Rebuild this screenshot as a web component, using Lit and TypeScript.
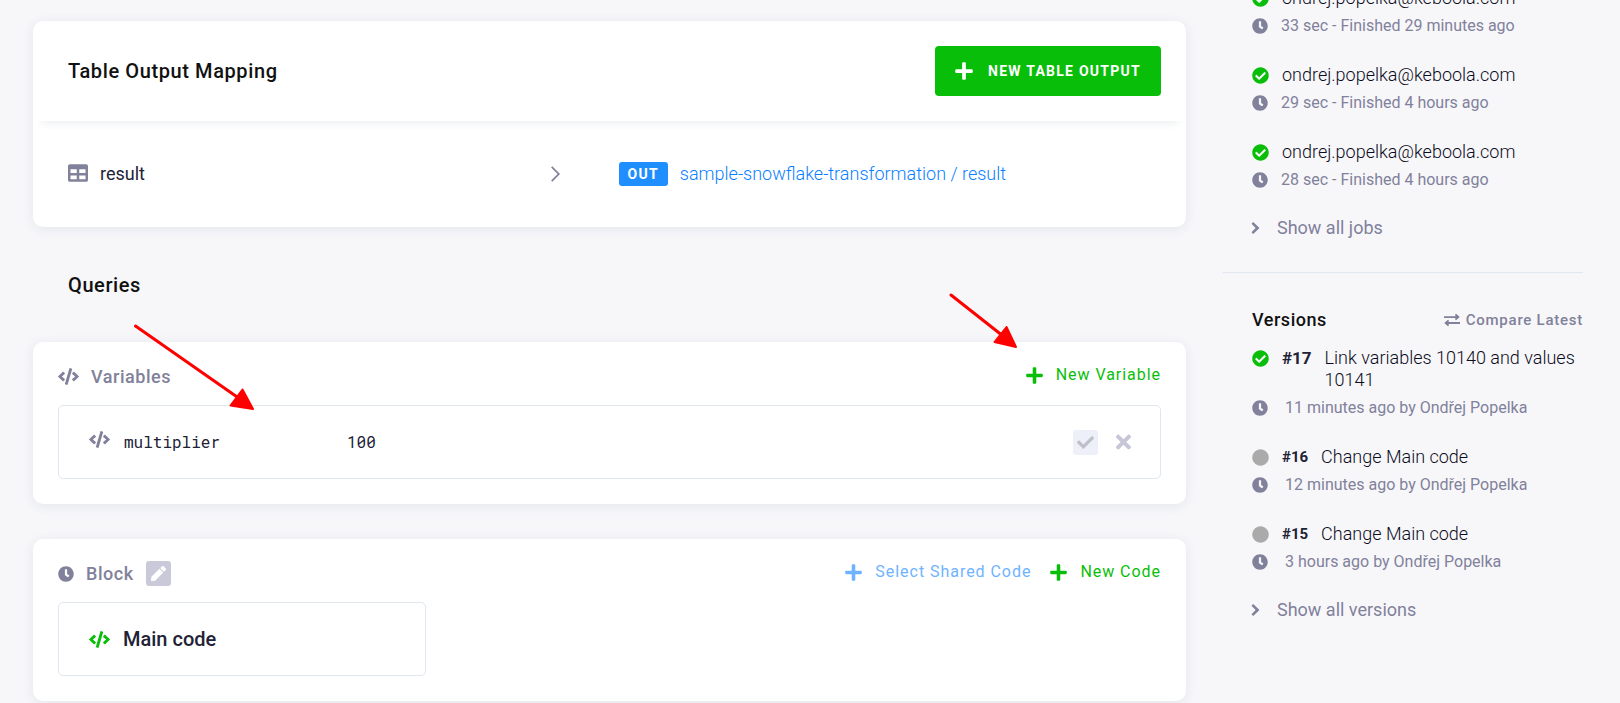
import { LitElement, html, svg, css } from "lit";
import { customElement, property } from "lit/decorators.js";

type Glyph = { w: number; h: number; d: string };

const GLYPHS: Record<string, Glyph> = {
  plus: { w: 448, h: 512, d: "M416 208H272V64c0-17.67-14.33-32-32-32h-32c-17.67 0-32 14.33-32 32v144H32c-17.67 0-32 14.33-32 32v32c0 17.67 14.33 32 32 32h144v144c0 17.67 14.33 32 32 32h32c17.67 0 32-14.33 32-32V304h144c17.67 0 32-14.33 32-32v-32c0-17.67-14.33-32-32-32z" },
  code: { w: 640, h: 512, d: "M278.9 511.5l-61-17.7c-6.4-1.8-10-8.5-8.2-14.9L346.2 8.7c1.8-6.4 8.5-10 14.9-8.2l61 17.7c6.4 1.8 10 8.5 8.2 14.9L293.8 503.3c-1.9 6.4-8.5 10.1-14.9 8.2zm-114-112.2l43.5-46.4c4.6-4.9 4.3-12.7-.8-17.2L117 256l90.6-79.7c5.1-4.5 5.5-12.3.8-17.2l-43.5-46.4c-4.5-4.8-12.1-5.1-17-.5L3.8 247.2c-5.1 4.7-5.1 12.8 0 17.5l144.1 135.1c4.9 4.6 12.5 4.4 17-.5zm327.2.6l144.1-135.1c5.1-4.7 5.1-12.8 0-17.5L492.1 112.1c-4.8-4.5-12.4-4.3-17 .5L431.6 159c-4.6 4.9-4.3 12.7.8 17.2L523 256l-90.6 79.7c-5.1 4.5-5.5 12.3-.8 17.2l43.5 46.4c4.5 4.9 12.1 5.1 17 .6z" },
  clock: { w: 512, h: 512, d: "M256 8C119 8 8 119 8 256s111 248 248 248 248-111 248-248S393 8 256 8zm57.1 350.1L224.9 294c-3.1-2.3-4.9-5.9-4.9-9.7V116c0-6.6 5.4-12 12-12h48c6.6 0 12 5.4 12 12v137.7l63.5 46.2c5.4 3.9 6.5 11.4 2.6 16.8l-28.2 38.8c-3.9 5.3-11.4 6.5-16.8 2.6z" },
  success: { w: 512, h: 512, d: "M504 256c0 136.967-111.033 248-248 248S8 392.967 8 256 119.033 8 256 8s248 111.033 248 248zM227.314 387.314l184-184c6.248-6.248 6.248-16.379 0-22.627l-22.627-22.627c-6.248-6.249-16.379-6.249-22.628 0L216 308.118l-70.059-70.059c-6.248-6.248-16.379-6.248-22.628 0l-22.627 22.627c-6.248 6.248-6.248 16.379 0 22.627l104 104c6.249 6.249 16.379 6.249 22.628.001z" },
  dot: { w: 512, h: 512, d: "M256 8C119 8 8 119 8 256s111 248 248 248 248-111 248-248S393 8 256 8z" },
  check: { w: 512, h: 512, d: "M173.898 439.404l-166.4-166.4c-9.997-9.997-9.997-26.206 0-36.204l36.203-36.204c9.997-9.998 26.207-9.998 36.204 0L192 312.69 432.095 72.596c9.997-9.997 26.207-9.997 36.204 0l36.203 36.204c9.997 9.997 9.997 26.206 0 36.204l-294.4 294.401c-9.998 9.997-26.207 9.997-36.204-.001z" },
  times: { w: 352, h: 512, d: "M242.72 256l100.07-100.07c12.28-12.28 12.28-32.19 0-44.48l-22.24-22.24c-12.28-12.28-32.19-12.28-44.48 0L176 189.28 75.93 89.21c-12.28-12.28-32.19-12.28-44.48 0L9.21 111.45c-12.28 12.28-12.28 32.19 0 44.48L109.28 256 9.21 356.07c-12.28 12.28-12.28 32.19 0 44.48l22.24 22.24c12.28 12.28 32.2 12.28 44.48 0L176 322.72l100.07 100.07c12.28 12.28 32.2 12.28 44.48 0l22.24-22.24c12.28-12.28 12.28-32.19 0-44.48L242.72 256z" },
  pen: { w: 512, h: 512, d: "M290.74 93.24l128.02 128.02-277.99 277.99-114.14 12.6C11.35 513.54-1.56 500.62.14 485.34l12.7-114.22 277.9-277.88zm207.2-19.06l-60.11-60.11c-18.75-18.75-49.16-18.75-67.91 0l-56.55 56.55 128.02 128.02 56.55-56.55c18.75-18.76 18.75-49.16 0-67.91z" },
  table: { w: 512, h: 512, d: "M464 32H48C21.49 32 0 53.49 0 80v352c0 26.51 21.49 48 48 48h416c26.51 0 48-21.49 48-48V80c0-26.51-21.49-48-48-48zM224 416H64v-96h160v96zm0-160H64v-96h160v96zm224 160H288v-96h160v96zm0-160H288v-96h160v96z" },
  angle: { w: 7, h: 12, d: "M1.2 0 L7 5.4 Q7.5 6 7 6.6 L1.2 12 L-.5 10.3 L3.6 6 L-.5 1.7 Z" },
  chevron: { w: 9, h: 16, d: "M1.3 .3 L9 8 L1.3 15.7 L.1 14.5 L6.6 8 L.1 1.5 Z" },
  exchange: { w: 16, h: 12, d: "M0 2.2H11.3V0.3Q11.6 -.4 12.3 0L15.3 2.6Q15.7 3.1 15.3 3.6L12.3 6.1Q11.6 6.4 11.3 5.8V4H0ZM16 8.1H4.7V6.2Q4.4 5.6 3.7 6L.7 8.5Q.3 9 .7 9.5L3.7 12Q4.4 12.4 4.7 11.7V9.9H16Z" },
};

// `size` is the drawn height; the width follows from the glyph's proportions.
const icon = (name: string, size: number) => {
  const g = GLYPHS[name];
  return html`<svg class="icon" aria-hidden="true" overflow="visible"
    width=${Math.round((size * g.w) / g.h)} height=${size}
    viewBox="0 0 ${g.w} ${g.h}">${svg`<path fill="currentColor" d=${g.d}></path>`}</svg>`;
};

const base = css`
  * { box-sizing: border-box; }
  h2, h3, h4, p, ul { margin: 0; padding: 0; }
  ul { list-style: none; }
  a { color: inherit; text-decoration: none; }
  button {
    display: inline-flex; align-items: center; justify-content: center;
    margin: 0; padding: 0; border: 0; background: none;
    font: inherit; color: inherit; cursor: pointer;
  }
  .icon { display: block; flex: none; }
`;

@customElement("job-entry")
class JobEntry extends LitElement {
  @property() user = "";
  @property() detail = "";

  static styles = [base, css`
    :host { display: grid; gap: 6px; line-height: 22px; }
    .row { display: flex; align-items: center; gap: 13px; }
    .user { color: var(--ink-light); font-size: 18px; font-weight: 350; }
    .ok { color: var(--green); }
    .meta { color: var(--muted); font-size: 16px; }
  `];

  render() {
    return html`
      <div class="row user"><span class="ok">${icon("success", 17)}</span><span>${this.user}</span></div>
      <div class="row meta">${icon("clock", 16)}<span>${this.detail}</span></div>`;
  }
}

@customElement("version-entry")
class VersionEntry extends LitElement {
  @property() number = "";
  @property() change = "";
  @property() detail = "";
  @property({ type: Boolean }) current = false;

  static styles = [base, css`
    :host { display: grid; gap: 6px; line-height: 22px; }
    .row { display: flex; align-items: flex-start; gap: 13px; color: var(--ink-light); font-size: 18px; font-weight: 350; }
    .mark { display: flex; align-items: center; height: 22px; color: #aaaaaa; }
    .current { color: var(--green); }
    .number { color: var(--ink); font-size: 15px; font-weight: 700; }
    .number.latest { font-size: 17px; }
    .meta { display: flex; align-items: center; gap: 17px; color: var(--muted); font-size: 16px; }
  `];

  render() {
    return html`
      <div class="row">
        <span class="mark ${this.current ? "current" : ""}">${icon(this.current ? "success" : "dot", 17)}</span>
        <span class="number ${this.current ? "latest" : ""}">${this.number}</span>
        <span>${this.change}</span>
      </div>
      <div class="meta">${icon("clock", 16)}<span>${this.detail}</span></div>`;
  }
}

@customElement("app-root")
class AppRoot extends LitElement {
  private jobs = [
    "33 sec - Finished 29 minutes ago",
    "29 sec - Finished 4 hours ago",
    "28 sec - Finished 4 hours ago",
  ];
  private versions = [
    { number: "#17", change: "Link variables 10140 and values 10141", detail: "11 minutes ago by Ondřej Popelka" },
    { number: "#16", change: "Change Main code", detail: "12 minutes ago by Ondřej Popelka" },
    { number: "#15", change: "Change Main code", detail: "3 hours ago by Ondřej Popelka" },
  ];

  static styles = [base, css`
    :host {
      --ink: #222236;
      --ink-light: #0c0c1c;
      --muted: #81819b;
      --green: #09be09;
      --blue: #1f8fff;
      --line: #e1e7f1;
      display: grid;
      grid-template-columns: minmax(0, 1fr) 360px;
      column-gap: 37px;
      position: relative;
      min-height: 100vh;
      overflow: hidden;
      padding: 0 37px 0 33px;
      background: #f7f7fa;
      color: var(--ink);
      font: 400 18px/22px Roboto, sans-serif;
    }
    .main { padding: 21px 0 2px; }
    .card { background: #fff; border-radius: 10px; box-shadow: 0 2px 12px rgba(34, 51, 84, 0.09); }
    .title { color: #111; font-size: 20px; font-weight: 500; line-height: 24px; letter-spacing: 0.03em; }
    .lead { padding: 46px 35px 45px; }

    .mapping-head {
      display: flex; align-items: center; justify-content: space-between;
      height: 100px; padding: 0 25px 0 35px;
      box-shadow: 0 10px 8px -8px rgba(34, 51, 84, 0.09);
    }
    .primary {
      gap: 15px; height: 50px; padding: 0 20px; border-radius: 4px;
      background: var(--green); color: #fff;
      font-size: 14px; font-weight: 700; letter-spacing: 0.09em; text-transform: uppercase;
    }
    .mapping-row {
      display: grid; grid-template-columns: 1fr 1fr; align-items: center; column-gap: 8px;
      height: 106px; padding: 0 25px 0 35px;
    }
    .source { display: flex; align-items: center; padding-right: 51px; color: var(--muted); }
    .source-name { display: flex; flex: 1; align-items: flex-start; gap: 12px; }
    .source-label { color: var(--ink); }
    .target { display: flex; align-items: center; gap: 12px; color: #0a80ff; font-weight: 350; }
    .badge {
      padding: 0 9px; border-radius: 3px; background: var(--blue); color: #fff;
      font-size: 14px; font-weight: 700; line-height: 24px; letter-spacing: 0.09em;
    }

    .panel { padding: 20px 25px 25px; }
    .panel + .panel { margin-top: 35px; }
    .panel-head { display: flex; align-items: flex-start; justify-content: space-between; height: 43px; }
    .panel-name {
      display: flex; align-items: center; gap: 12px; height: 29px; color: var(--muted);
    }
    .panel-title { font-size: 18px; font-weight: 500; letter-spacing: 0.03em; }
    .actions { display: flex; gap: 19px; }
    .action { gap: 13px; height: 26px; color: var(--green); font-size: 16px; font-weight: 450; letter-spacing: 0.06em; }
    .shared { color: #6fb3ff; }
    .square { width: 25px; height: 25px; border-radius: 3px; }
    .edit { background: #c9c9da; color: #fff; }
    .save { background: #edf0f8; color: #bfbfca; }
    .remove { color: #c6c6d8; }

    .item { display: flex; align-items: center; gap: 13px; height: 74px; padding: 0 30px; border: 1px solid var(--line); border-radius: 5px; }
    .variable { gap: 0; padding-right: 24px; color: var(--muted); }
    .variable-name { display: flex; align-items: flex-start; gap: 14px; width: 258px; }
    .mono { color: var(--ink); font: 400 16px/22px "Roboto Mono", "DejaVu Sans Mono", monospace; }
    .variable-value { flex: 1; }
    .item-actions { display: flex; gap: 13px; }
    .codes { display: grid; grid-template-columns: repeat(3, minmax(0, 1fr)); }
    .code { color: var(--green); }
    .code-name { color: var(--ink); font-size: 20px; font-weight: 500; line-height: 24px; }

    .side { display: grid; align-content: start; margin-top: -13px; }
    .section { padding-left: 29px; }
    .jobs { padding-bottom: 33px; border-bottom: 1px solid var(--line); }
    .versions { padding-top: 35px; }
    .entries { display: grid; gap: 27px; }
    .side-head { display: flex; align-items: center; justify-content: space-between; height: 24px; margin-bottom: 15px; }
    .side-title { color: #111; font-size: 18px; font-weight: 500; letter-spacing: 0.03em; }
    .compare { display: flex; align-items: center; gap: 6px; color: var(--muted); font-size: 15px; font-weight: 500; letter-spacing: 0.05em; }
    .more { display: flex; align-items: center; gap: 18px; margin-top: 26px; color: var(--muted); }

    .arrow { position: absolute; pointer-events: none; color: #f00; }
    .to-variable { left: 134px; top: 324px; }
    .to-new { left: 949px; top: 293px; }
  `];

  private action(label: string, extra = "") {
    return html`<button type="button" class="action ${extra}">${icon("plus", 19)}<span>${label}</span></button>`;
  }

  render() {
    return html`
      <main class="main">
        <section class="card">
          <header class="mapping-head">
            <h2 class="title">Table Output Mapping</h2>
            <button type="button" class="primary">${icon("plus", 20)}<span>New Table Output</span></button>
          </header>
          <div class="mapping-row">
            <div class="source">
              <span class="source-name">${icon("table", 20)}<span class="source-label">result</span></span>
              ${icon("chevron", 16)}
            </div>
            <div class="target">
              <span class="badge">OUT</span>
              <a href="#result">sample-snowflake-transformation / result</a>
            </div>
          </div>
        </section>

        <h2 class="title lead">Queries</h2>

        <section class="card panel">
          <header class="panel-head">
            <div class="panel-name">${icon("code", 17)}<h3 class="panel-title">Variables</h3></div>
            <div class="actions">${this.action("New Variable")}</div>
          </header>
          <div class="item variable">
            <span class="variable-name">${icon("code", 17)}<span class="mono">multiplier</span></span>
            <span class="variable-value mono">100</span>
            <div class="item-actions">
              <button type="button" class="square save" aria-label="Save variable">${icon("check", 17)}</button>
              <button type="button" class="square remove" aria-label="Remove variable">${icon("times", 22)}</button>
            </div>
          </div>
        </section>

        <section class="card panel">
          <header class="panel-head">
            <div class="panel-name">
              ${icon("clock", 16)}<h3 class="panel-title">Block</h3>
              <button type="button" class="square edit" aria-label="Edit block">${icon("pen", 15)}</button>
            </div>
            <div class="actions">${this.action("Select Shared Code", "shared")}${this.action("New Code")}</div>
          </header>
          <div class="codes">
            <a class="item code" href="#main-code">${icon("code", 17)}<span class="code-name">Main code</span></a>
          </div>
        </section>
      </main>

      <aside class="side">
        <section class="section jobs">
          <ul class="entries">
            ${this.jobs.map((d) => html`<li><job-entry user="ondrej.popelka@keboola.com" detail=${d}></job-entry></li>`)}
          </ul>
          <a class="more" href="#jobs">${icon("angle", 12)}<span>Show all jobs</span></a>
        </section>
        <section class="section versions">
          <header class="side-head">
            <h4 class="side-title">Versions</h4>
            <a class="compare" href="#compare">${icon("exchange", 12)}<span>Compare Latest</span></a>
          </header>
          <ul class="entries">
            ${this.versions.map((v, i) => html`<li>
              <version-entry number=${v.number} change=${v.change} detail=${v.detail} ?current=${i === 0}></version-entry>
            </li>`)}
          </ul>
          <a class="more" href="#versions">${icon("angle", 12)}<span>Show all versions</span></a>
        </section>
      </aside>

      <svg class="arrow to-variable" width="122" height="88" viewBox="134 324 122 88" aria-hidden="true">
        <path d="M135.5 326 L240 399" stroke="currentColor" stroke-width="3" fill="none" stroke-linecap="round"></path>
        <path d="M253 409 L242.5 389.5 L230.5 405.5 Z" fill="currentColor" stroke="currentColor" stroke-width="2" stroke-linejoin="round"></path>
      </svg>
      <svg class="arrow to-new" width="70" height="57" viewBox="949 293 70 57" aria-hidden="true">
        <path d="M951 295 L1003 336" stroke="currentColor" stroke-width="3" fill="none" stroke-linecap="round"></path>
        <path d="M1016 347 L1006.5 327 L994.5 342 Z" fill="currentColor" stroke="currentColor" stroke-width="2" stroke-linejoin="round"></path>
      </svg>`;
  }
}
